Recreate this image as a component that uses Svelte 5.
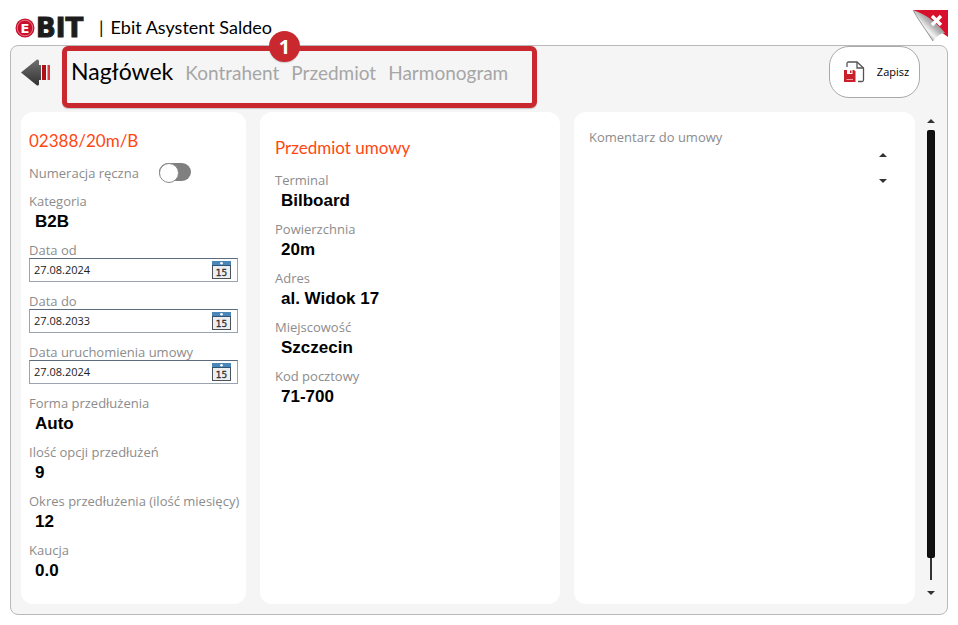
<script>
  const tabs = ['Nagłówek', 'Kontrahent', 'Przedmiot', 'Harmonogram'];
  let active = $state('Nagłówek');
  let manual = $state(false);
  let comment = $state('');
  let dates = $state([
    { id: 'date-from', label: 'Data od', value: '27.08.2024' },
    { id: 'date-to', label: 'Data do', value: '27.08.2033' },
    { id: 'date-start', label: 'Data uruchomienia umowy', value: '27.08.2024' }
  ]);
  const category = [['Kategoria', 'B2B']];
  const terms = [
    ['Forma przedłużenia', 'Auto'],
    ['Ilość opcji przedłużeń', '9'],
    ['Okres przedłużenia (ilość miesięcy)', '12'],
    ['Kaucja', '0.0']
  ];
  const subject = [
    ['Terminal', 'Bilboard'],
    ['Powierzchnia', '20m'],
    ['Adres', 'al. Widok 17'],
    ['Miejscowość', 'Szczecin'],
    ['Kod pocztowy', '71-700']
  ];
</script>

{#snippet facts(items)}
  <dl>
    {#each items as [name, value]}
      <div>
        <dt>{name}</dt>
        <dd>{value}</dd>
      </div>
    {/each}
  </dl>
{/snippet}

{#snippet arrow(down)}
  <svg width="8" height="4" viewBox="0 0 8 4" aria-hidden="true">
    <path d={down ? 'M0 0h8L4 4z' : 'M0 4h8L4 0z'} fill="#333" />
  </svg>
{/snippet}

<div class="page">
  <header>
    <div class="brand">
      <svg width="20" height="20" viewBox="0 0 20 20" aria-hidden="true">
        <circle cx="10" cy="10" r="9.5" fill="#c8102e" />
        <circle cx="10" cy="10" r="7.800" fill="none" stroke="#f0a0a8" stroke-width=".7" />
        <text x="10" y="15" text-anchor="middle" fill="#fff" font-family="DejaVu Sans" font-weight="700" font-size="13">E</text>
      </svg>
      <b>BIT</b>
    </div>
    <h1><span>|</span>Ebit Asystent Saldeo</h1>
    <button class="close" aria-label="Zamknij">
      <svg width="35" height="31" viewBox="0 0 35 31">
        <defs>
          <linearGradient id="curl" x1="0" y1="1" x2="1" y2="0">
            <stop offset=".2" stop-color="#777" />
            <stop offset=".4" stop-color="#f4f4f4" />
            <stop offset=".55" stop-color="#b4b4b4" />
            <stop offset=".8" stop-color="#777" />
          </linearGradient>
        </defs>
        <path d="M0 0H35V27L28 22z" fill="#d8102c" />
        <path d="M0 0C8 3 14 6 20 11S28 18 32 23C27 23 25 26 20 31C17 26 10 14 0 0z" fill="url(#curl)" />
        <path d="M0 0C6 11 13 20 20 31" fill="none" stroke="#777" stroke-width=".8" />
        <path d="M19 6l9 9M28 6l-9 9" stroke="#fff" stroke-width="3.4" />
      </svg>
    </button>
  </header>

  <main>
    <div class="toolbar">
      <button class="back" aria-label="Wstecz">
        <svg width="30" height="27" viewBox="0 0 30 27">
          <defs>
            <linearGradient id="steel" x1="0" y1="0" x2="0" y2="1">
              <stop offset="0" stop-color="#707070" />
              <stop offset="1" stop-color="#333" />
            </linearGradient>
          </defs>
          <path d="M0 13.500L16 .5Q18 0 18 2V6H20V21H18V25Q18 27 16 26.500z" fill="url(#steel)" />
          <path d="M21 6h4v15H21z" fill="#b01015" />
          <path d="M26.500 6H29v15h-2.500z" fill="#d8393c" />
        </svg>
      </button>
      <nav>
        {#each tabs as tab}
          <button class:active={tab === active} onclick={() => (active = tab)}>{tab}</button>
        {/each}
        <span class="badge">1</span>
      </nav>
      <button class="save">
        <svg width="22" height="22" viewBox="0 0 22 22" aria-hidden="true">
          <path d="M4 6V2.500Q4 1 5.500 1H14L20.500 7V19Q20.500 20.500 19 20.500H15" fill="none" stroke="#555" stroke-width="1.300" />
          <path d="M14 1V7H20.500" fill="none" stroke="#555" stroke-width="1.300" />
          <path d="M1 9H11L12.500 10.500V21H1z" fill="#c8202a" />
          <path d="M4 9h5.500v4H4z" fill="#fff" />
          <path d="M7 9.500h1.500v2.500H7z" fill="#c8202a" />
          <path d="M3.500 18.500h6.500" stroke="#e9a0a4" />
        </svg>
        Zapisz
      </button>
    </div>

    <div class="body">
      <div class="cards">
        <section class="card contract">
          <h2>02388/20m/B</h2>
          <div class="manual">
            <label for="manual">Numeracja ręczna</label>
            <input id="manual" type="checkbox" role="switch" bind:checked={manual} />
          </div>
          {@render facts(category)}
          {#each dates as date}
            <div>
              <label for={date.id}>{date.label}</label>
              <div class="date">
                <input id={date.id} type="text" bind:value={date.value} />
                <button aria-label="Wybierz datę: {date.label}">
                  <svg width="19" height="18" viewBox="0 0 19 18">
                    <rect x=".5" y=".5" width="18" height="17" fill="#eceef0" stroke="#4c5259" />
                    <path d="M0 0h19v5H0z" fill="#4a86b8" />
                    <path d="M0 4.500h19" stroke="#2f5475" />
                    <circle cx="9.500" cy="2.300" r="1.300" fill="#fff" />
                    <text x="9.500" y="15" text-anchor="middle" fill="#333" font-family="DejaVu Sans" font-size="9" stroke="#333" stroke-width=".3">15</text>
                  </svg>
                </button>
              </div>
            </div>
          {/each}
          {@render facts(terms)}
        </section>

        <section class="card subject">
          <h2>Przedmiot umowy</h2>
          {@render facts(subject)}
        </section>

        <section class="card comment">
          <label for="comment">Komentarz do umowy</label>
          <div class="memo">
            <textarea id="comment" bind:value={comment}></textarea>
            <div class="steps">
              <button aria-label="Przewiń komentarz w górę">{@render arrow(false)}</button>
              <button aria-label="Przewiń komentarz w dół">{@render arrow(true)}</button>
            </div>
          </div>
        </section>
      </div>

      <div class="scroll">
        <button aria-label="W górę">{@render arrow(false)}</button>
        <div class="track"><div class="thumb"></div></div>
        <button aria-label="W dół">{@render arrow(true)}</button>
      </div>
    </div>
  </main>
</div>

<style>
  :global(body) {
    margin: 0;
    background: #fff;
  }
  .page {
    box-sizing: border-box;
    min-height: 100vh;
    display: flex;
    flex-direction: column;
    padding: 0 10px 10px;
    font-family: Lato, 'Open Sans', sans-serif;
    font-size: 13px;
    line-height: 18px;
    color: #000;
  }
  .page * {
    box-sizing: border-box;
  }
  button {
    margin: 0;
    padding: 0;
    border: 0;
    background: none;
    font: inherit;
    color: inherit;
    cursor: pointer;
  }
  svg {
    display: block;
    flex: none;
  }
  header {
    display: flex;
    align-items: center;
    gap: 8px;
    height: 45px;
    padding: 10px 0 0 5px;
  }
  .brand {
    display: flex;
    align-items: center;
    gap: 1px;
    width: 76px;
  }
  .brand b {
    font: 700 26px/24px 'DejaVu Sans', sans-serif;
    color: #1c1c1c;
    -webkit-text-stroke: 1px #1c1c1c;
  }
  h1 {
    display: flex;
    gap: 7px;
    margin: 0;
    padding-bottom: 2px;
    font-size: 18px;
    font-weight: 400;
    line-height: 24px;
  }
  .close {
    align-self: flex-start;
    margin-left: auto;
  }
  main {
    flex: 1;
    display: flex;
    flex-direction: column;
    gap: 4px;
    padding: 0 10px 10px;
    border: 1px solid #b9b9b9;
    border-radius: 8px;
    background: #f5f5f5;
  }
  .toolbar {
    display: flex;
    align-items: flex-start;
    gap: 11px;
  }
  .back {
    margin-top: 13px;
  }
  nav {
    position: relative;
    display: flex;
    align-items: baseline;
    gap: 12px;
    height: 62px;
    padding: 6px 24px 0 4px;
    border: 5px solid #c9282f;
    border-radius: 6px;
    box-shadow: 0 1px 1px #8886;
    font-size: 19px;
    line-height: 28px;
    color: #a6a6a6;
  }
  nav .active {
    font-size: 23px;
    color: #000;
  }
  .badge {
    position: absolute;
    top: -20px;
    left: 202px;
    width: 31px;
    height: 31px;
    border-radius: 50%;
    background: #c9282f;
    box-shadow: 0 1px 1px #8886;
    color: #fff;
    font: 700 20px/31px 'Open Sans', sans-serif;
    text-align: center;
  }
  .save {
    display: flex;
    align-items: center;
    justify-content: center;
    gap: 12px;
    width: 91px;
    height: 52px;
    margin: 0 17px 0 auto;
    padding-left: 3px;
    border: 1px solid #a9a9a9;
    border-radius: 20px;
    background: #fff;
    font: 11px/16px 'Open Sans', sans-serif;
  }
  .body {
    flex: 1;
    display: flex;
    gap: 11px;
    padding-right: 1px;
  }
  .cards {
    flex: 1;
    display: grid;
    grid-template-columns: 225fr 300fr 341fr;
    gap: 14px;
  }
  .card {
    display: flex;
    flex-direction: column;
    gap: 9px;
    min-width: 0;
    border-radius: 12px;
    background: #fff;
  }
  .contract {
    padding: 17px 8px;
  }
  .subject {
    gap: 10px;
    padding: 24px 15px;
  }
  .comment {
    gap: 4px;
    padding: 15px;
  }
  h2 {
    margin: 0;
    font-size: 17px;
    font-weight: 400;
    line-height: 24px;
    color: #ff4713;
  }
  label,
  dt {
    display: block;
    height: 18px;
    font: 13px/20px 'Open Sans', sans-serif;
    color: #8c8c8c;
    white-space: nowrap;
  }
  dl {
    display: flex;
    flex-direction: column;
    gap: 9px;
    margin: 0;
  }
  dd {
    height: 22px;
    margin: 0;
    padding-left: 6px;
    font: 700 17px/25px 'Liberation Sans', sans-serif;
  }
  .manual {
    display: flex;
    align-items: center;
    gap: 20px;
    height: 20px;
  }
  .manual input {
    appearance: none;
    display: flex;
    width: 32px;
    height: 18px;
    margin: 0;
    border-radius: 9px;
    background: #808080;
  }
  .manual input::before {
    content: '';
    width: 18px;
    height: 18px;
    border: 1px solid #8a8a8a;
    border-radius: 50%;
    background: #fff;
  }
  .manual input:checked {
    justify-content: flex-end;
    background: #c9282f;
  }
  .date {
    display: flex;
    align-items: center;
    height: 24px;
    padding: 0 6px 0 4px;
    border: 1px solid #9aa3b0;
    border-top-color: #5c6b7e;
  }
  .date input {
    flex: 1;
    min-width: 0;
    padding: 0;
    border: 0;
    outline: 0;
    background: none;
    font: 11px/16px 'Open Sans', sans-serif;
    color: #222;
  }
  .memo {
    display: flex;
  }
  textarea {
    flex: 1;
    min-width: 0;
    height: 38px;
    padding: 0;
    border: 0;
    outline: 0;
    resize: none;
    background: none;
    font: inherit;
  }
  .steps {
    display: flex;
    flex-direction: column;
    justify-content: space-between;
    width: 26px;
    padding: 4px 0;
  }
  .steps button {
    padding: 0 5px;
  }
  .scroll {
    display: flex;
    flex-direction: column;
    align-items: center;
    gap: 7px;
    width: 10px;
    padding: 7px 0 9px;
  }
  .track {
    flex: 1;
    display: flex;
    justify-content: center;
    width: 8px;
    margin-bottom: 4px;
    background: linear-gradient(#333, #333) center / 2px 100% no-repeat;
  }
  .thumb {
    width: 8px;
    height: 95%;
    border: 1px solid #0005;
    border-radius: 2px;
    background: #111;
  }
</style>
